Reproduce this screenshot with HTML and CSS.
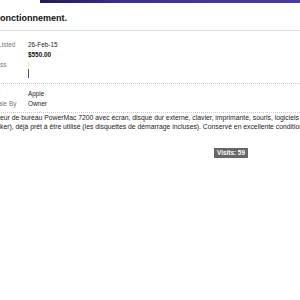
FILE: index.html
```html
<!DOCTYPE html>
<html lang="fr">
<head>
<meta charset="utf-8">
<title>Annonce</title>
<link rel="stylesheet" href="styles.css">
</head>
<body>
<div class="topbar"></div>
<div class="page">
  <h1 class="title">onctionnement.</h1>
  <div class="group">
    <div class="row"><span class="label">Date Listed</span><div class="value">26-Feb-15<br><strong class="price">$550.00</strong></div></div>
    <div class="row"><span class="label">Address</span><div class="value"><span class="tick"></span><span class="caret"></span></div></div>
  </div>
  <div class="group group-2">
    <div class="row"><span class="label">Brand</span><div class="value">Apple</div></div>
    <div class="row"><span class="label">For Sale By</span><div class="value">Owner</div></div>
  </div>
  <p class="desc">eur de bureau PowerMac 7200 avec écran, disque dur externe, clavier, imprimante, souris, logiciels<br>ker), déjà prêt à être utilisé (les disquettes de démarrage incluses). Conservé en excellente condition.</p>
  <div class="visits-row"><span class="visits">Visits: 59</span></div>
</div>
</body>
</html>
```
FILE: styles.css
```css
body {
  margin: 0;
  overflow: hidden;
  background: #fff;
  color: #222;
  font-family: "Liberation Sans", Arial, sans-serif;
}
.topbar {
  margin-left: 40px;
  height: 3px;
  background: linear-gradient(to right, #221c50, #3d3190 35%, #4a3c9c);
}
.page {
  margin-left: -17px;
}
.title {
  margin: 9px 0 0;
  padding: 0 0 6px 17px;
  font-size: 9px;
  line-height: 12px;
  font-weight: bold;
  color: #111;
  border-bottom: 1px solid #ddd;
  white-space: nowrap;
}
.group {
  padding: 9px 0 5px;
  border-bottom: 1px dotted #c8c8c8;
}
.group-2 {
  padding: 5px 0 3px;
}
.row {
  display: flex;
  font-size: 6.4px;
  line-height: 10px;
}
.label {
  flex: none;
  width: 45px;
  color: #777;
  white-space: nowrap;
}
.value {
  display: flex;
  flex-direction: column;
  align-items: flex-start;
  color: #222;
}
.price {
  color: #111;
}
.tick {
  width: 1px;
  height: 4px;
  margin-top: 2px;
  background: #f0e08a;
}
.caret {
  width: 1px;
  height: 9px;
  margin-top: 3px;
  background: #555;
}
.desc {
  margin: 0;
  padding-left: 17px;
  font-size: 6.8px;
  line-height: 9px;
  color: #222;
  white-space: nowrap;
}
.visits-row {
  margin-top: 10px;
  padding-left: 231px;
}
.visits {
  display: inline-block;
  padding: 0 3px;
  height: 10px;
  line-height: 10px;
  font-size: 6.4px;
  font-weight: bold;
  color: #fff;
  background: #666;
}
```
